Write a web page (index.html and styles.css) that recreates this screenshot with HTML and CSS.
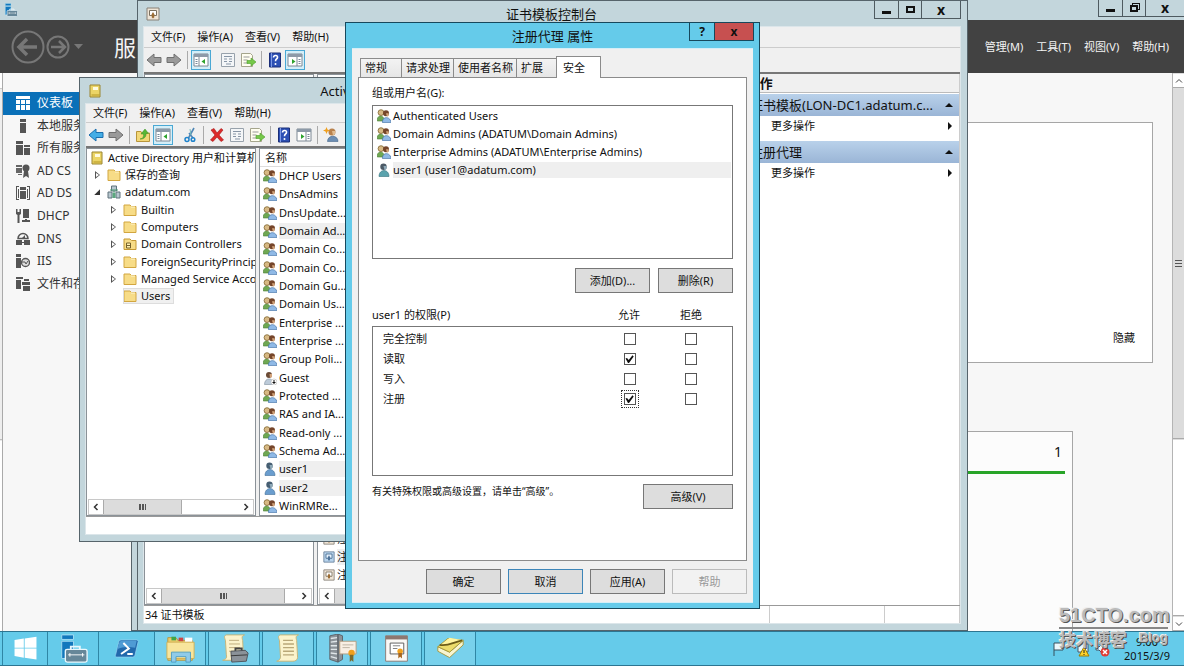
FILE: index.html
```html
<!DOCTYPE html>
<html lang="zh-CN">
<head>
<meta charset="utf-8">
<title>注册代理 属性</title>
<link rel="stylesheet" href="styles.css">
</head>
<body>
<svg class="sprite" aria-hidden="true">
  <symbol id="back" viewBox="0 0 16 16"><path d="M1 8l7-6v3.500h7v5H8V14z" fill="#45aee6" stroke="#1b6fae"/></symbol>
  <symbol id="back-off" viewBox="0 0 16 16"><path d="M1 8l7-6v3.500h7v5H8V14z" fill="#9a9a9a" stroke="#707070"/></symbol>
  <symbol id="fwd-off" viewBox="0 0 16 16"><path d="M15 8L8 2v3.500H1v5h7V14z" fill="#9a9a9a" stroke="#707070"/></symbol>
  <symbol id="pane" viewBox="0 0 16 16"><path d="M1 2h14v12H1z" fill="#fff" stroke="#7c8894"/><path d="M1 2h14v3H1z" fill="#8d9aa8"/><path d="M6 5v9" stroke="#7c8894"/><path d="M2.500 7.500h2M2.500 9.500h2M2.500 11.500h2" stroke="#789"/><path d="M12 7v5L8.500 9.500z" fill="#2da32d"/></symbol>
  <symbol id="pane2" viewBox="0 0 16 16"><path d="M1 2h14v12H1z" fill="#fff" stroke="#7c8894"/><path d="M1 2h14v3H1z" fill="#8d9aa8"/><path d="M10 5v9" stroke="#7c8894"/><path d="M11.500 7.500h2M11.500 9.500h2M11.500 11.500h2" stroke="#789"/><path d="M5 7v5l3.500-2.500z" fill="#2da32d"/></symbol>
  <symbol id="props" viewBox="0 0 16 16"><path d="M1.500 1.500h13v13h-13z" fill="#f4f6f8" stroke="#98a2ac"/><path d="M4 4.500h8M4 7h3M9 7h3M4 9.500h3M9 9.500h3M6 12h5" stroke="#8795a6"/></symbol>
  <symbol id="export" viewBox="0 0 16 16"><path d="M1.500 1.500h9l2 2v11h-11z" fill="#fffef0" stroke="#a5a58c"/><path d="M3.500 5h6M3.500 8h4M3.500 11h4" stroke="#999"/><path d="M7 8.500h4V6l5 4-5 4v-2.500H7z" fill="#76c84a" stroke="#4a9e27" stroke-width=".6"/></symbol>
  <symbol id="help" viewBox="0 0 16 16"><path d="M2.500 1h11v14h-11z" fill="#2d50b4" stroke="#1b2e78"/><path d="M4.500 1v14" stroke="#7f9be6"/><path d="M6.500 5.500c.2-3 4.500-2.500 4 0-.3 1.500-2 1.600-2 3.700" fill="none" stroke="#fff" stroke-width="1.600"/><circle cx="8.500" cy="12" r="1" fill="#fff"/></symbol>
  <symbol id="up" viewBox="0 0 16 16"><path d="M1.500 4.500H6l1 1.500h7.500v8.500h-13z" fill="#f3d878" stroke="#b8953a"/><path d="M5 12c3 0 4-3 3.500-5H6l4-5 3.500 4.500H11c.5 3-2 6-6 5.500z" fill="#57b737" stroke="#388f20" stroke-width=".5"/></symbol>
  <symbol id="cut" viewBox="0 0 16 16"><path d="M12 1L6.500 11M7 6l4 5" stroke="#5087b6" stroke-width="1.600"/><path d="M8 2l1 6" stroke="#7bb"/><circle cx="5" cy="12.500" r="2" fill="none" stroke="#1f83cb" stroke-width="1.500"/><circle cx="11" cy="12.500" r="1.800" fill="none" stroke="#1f83cb" stroke-width="1.500"/></symbol>
  <symbol id="del" viewBox="0 0 16 16"><path d="M2 3l3-1.500L8 6l4-4.500L14 3l-4 5 4.500 5-2.500 1.500L8 10l-4 4.500L1.500 13 6 8z" fill="#dd2b2b" stroke="#a31414" stroke-width=".6"/></symbol>
  <symbol id="newuser" viewBox="0 0 16 16"><circle cx="9" cy="5" r="3.500" fill="#b8814c"/><path d="M9 4h3v3l-2 1.500z" fill="#e0bb90"/><path d="M4.500 14.500c0-7 10.500-7 10.500 0z" fill="#6b8db3" stroke="#44668c" stroke-width=".6"/><path d="M3.500 0l1 2.500 2.500 1-2.500 1-1 2.500-1-2.500L0 3.500l2.500-1z" fill="#f0a020"/></symbol>
  <symbol id="book" viewBox="0 0 14 14"><path d="M2 1h10v12H2z" fill="#ecd566" stroke="#9a8530"/><path d="M3.500 11h8" stroke="#b39622"/><path d="M5 3h5v3H5z" fill="#fffbe0"/></symbol>
  <symbol id="cert" viewBox="0 0 14 14"><path d="M1 1h12v12H1z" fill="#efe5d7" stroke="#888076"/><path d="M3.500 3.500h7v5h-7z" fill="#fff" stroke="#7b7060"/><path d="M7 5l1.500 2.500L8 11.500l-1-1-1 1-.5-4z" fill="#9c6c34"/></symbol>
  <symbol id="certb" viewBox="0 0 14 14"><path d="M1 1h12v12H1z" fill="#b7d3ec" stroke="#667f99"/><path d="M3.500 3.500h7v5h-7z" fill="#e8f4ff" stroke="#456b90"/><path d="M7 5l1.500 2.500L8 11.500l-1-1-1 1-.5-4z" fill="#4d7299"/></symbol>
  <symbol id="folder" viewBox="0 0 14 14"><path d="M1 2h6l1.500 1.500H13v9H1z" fill="#f7dc87" stroke="#d2a640"/><path d="M8 4h4" stroke="#fff6cf"/></symbol>
  <symbol id="folder-dc" viewBox="0 0 14 14"><path d="M1 2h6l1.500 1.500H13v9H1z" fill="#f7dc87" stroke="#c49833"/><path d="M3.500 6h4v5h-4z" fill="#fff0b0" stroke="#75612a"/><path d="M4 8.500h3" stroke="#75612a"/></symbol>
  <symbol id="domain" viewBox="0 0 14 14"><path d="M4.500 1h5v5h-5zM1 7h4v6H1zM9 7h4v6H9z" fill="#b7c7cf" stroke="#60737d"/><path d="M3 5h8M7 6v6" stroke="#4b9b73"/><path d="M5.500 8h3v5h-3z" fill="#5ba77f"/></symbol>
  <symbol id="group" viewBox="0 0 14 14"><path d="M.3 12C-.5 5.500 7 5 7.500 12z" fill="#6fa852" stroke="#4b7d35" stroke-width=".6"/><circle cx="4" cy="3.600" r="2.900" fill="#d7b984" stroke="#80652f" stroke-width=".8"/><circle cx="9" cy="4.200" r="3" fill="#75452a"/><path d="M9 4.200h2.700v2.500L10 7.800z" fill="#d2a47b"/><path d="M5.500 13.600C4.800 7 13.800 7 13.900 13.600z" fill="#8fb9e6" stroke="#4472a8" stroke-width=".7"/></symbol>
  <symbol id="user" viewBox="0 0 14 14"><circle cx="6.500" cy="3.800" r="3.200" fill="#465e72"/><path d="M6.500 3h3v3l-2 1z" fill="#8ea9b8"/><path d="M2 13.500C2 5.500 12 5.500 12 13.500z" fill="#6a9dce" stroke="#426e98" stroke-width=".6"/></symbol>
  <symbol id="user-teal" viewBox="0 0 14 14"><circle cx="6.500" cy="3.800" r="3.200" fill="#4c5a66"/><path d="M6.500 3h3v3l-2 1z" fill="#8ea9b8"/><path d="M2 13.500C2 5.500 12 5.500 12 13.500z" fill="#5aa3ad" stroke="#35727c" stroke-width=".6"/></symbol>
  <symbol id="guest" viewBox="0 0 14 14"><circle cx="6" cy="4" r="3" fill="#6b4b36"/><path d="M6.500 3H9v3L7 7z" fill="#d4a47c"/><path d="M1.500 13.500c0-7.500 9-7.500 9 0z" fill="#bdcbd9" stroke="#7d8e9e" stroke-width=".6"/><circle cx="11" cy="11" r="3" fill="#fff" stroke="#aaa" stroke-width=".5"/><path d="M10.500 9h1v2H13l-2 2-2-2h1.500z" fill="#111"/></symbol>
  <symbol id="dash" viewBox="0 0 14 14"><path d="M0 0h14v3H0zM0 4h4v4H0zM5 4h4v4H5zM10 4h4v4h-4zM0 9h4v5H0zM5 9h4v5H5zM10 9h4v5h-4z" fill="#fff"/></symbol>
  <symbol id="srv" viewBox="0 0 14 14"><path d="M4 0h6v3H4zM4 4h6v10H4z" fill="#555"/></symbol>
  <symbol id="srvs" viewBox="0 0 14 14"><path d="M0 0h7v3H0zM0 4h7v10H0zM8 4h6v2H8zM8 7h6v7H8z" fill="#555"/></symbol>
  <symbol id="adcs" viewBox="0 0 14 14"><path d="M0 1h6v2H0zM0 4h6v5H0zM2 10h4v1H2z" fill="#666"/><circle cx="10" cy="4" r="3.500" fill="#555"/><path d="M8 7l-1 7 3-2 3 2-1-7z" fill="#555"/></symbol>
  <symbol id="adds" viewBox="0 0 14 14"><path d="M0 0h3v1H1v12h2v1H0zM14 0h-3v1h2v12h-2v1h3zM4 1h6v3H4zM4 5h6v8H4zM2 3h1v9H2zM11 3h1v9h-1z" fill="#555"/></symbol>
  <symbol id="dhcp" viewBox="0 0 14 14"><path d="M0 0h1.500v3h2V0H5v5L3.500 6v8h-2V6L0 5zM7 0h6v9H7zM6 11h3v-1h2v1h3v2H6z" fill="#555"/></symbol>
  <symbol id="dns" viewBox="0 0 14 14"><path d="M2 6.500a5 5 0 0 1 10 0z" fill="none" stroke="#555" stroke-width="1.500"/><path d="M6 6l3-3v3zM0 8h6v5H0zM8 8h6v5H8zM6 10h2v1H6z" fill="#555"/></symbol>
  <symbol id="iis" viewBox="0 0 14 14"><path d="M0 0h5v3H0zM0 4h5v10H0z" fill="#555"/><circle cx="9.500" cy="8.500" r="4" fill="#ddd" stroke="#555" stroke-width="1.300"/><path d="M6 8h3l1 2 2-3" stroke="#555" fill="none"/></symbol>
  <symbol id="files" viewBox="0 0 14 14"><path d="M0 0h7v2H0zM0 3h5v9H0zM8 2h5v2H8zM6 5h8v3H6zM7 9h7v5H7z" fill="#555"/></symbol>
  <symbol id="srvmgr" viewBox="0 0 32 32"><path d="M3 1h13v5H3zM3 8h13v19H3z" fill="#1278bd" stroke="#a9def3"/><path d="M13 17v-3h10v3" fill="none" stroke="#e9f7fc" stroke-width="2"/><rect x="7" y="17" width="24" height="14" rx="2" fill="#668799" stroke="#e9f7fc" stroke-width="1.500"/><path d="M10 23h18M12 21v4M26 21v4" stroke="#fff"/></symbol>
</svg>

<main class="desktop">
  <section class="server" aria-label="服务器管理器">
    <div class="server-title">
      <svg class="i14"><use href="#srvmgr"/></svg>
      <div class="controls"><button aria-label="最小化"><i class="min"></i></button><button aria-label="还原"><i class="max rest"></i></button><button class="wide" aria-label="关闭">x</button></div>
    </div>
    <header class="server-head">
      <svg class="nav" viewBox="0 0 76 36"><g fill="none" stroke="#777" stroke-width="2"><circle cx="17" cy="18" r="15.500"/><circle cx="47" cy="18" r="10.500"/></g><path d="M26 18H9M16 10l-8 8 8 8" fill="none" stroke="#777" stroke-width="3.500"/><path d="M40 18h13M48 12l6 6-6 6" fill="none" stroke="#777" stroke-width="2.500"/><path d="M63 15h9l-4.500 5z" fill="#777"/></svg>
      <h1>服务器管理器</h1>
      <nav><a href="#">管理(M)</a><a href="#">工具(T)</a><a href="#">视图(V)</a><a href="#">帮助(H)</a></nav>
    </header>
    <div class="server-body">
      <div class="edge"></div>
      <nav class="side">
        <a class="on" href="#"><svg class="i14"><use href="#dash"/></svg>仪表板</a>
        <a href="#"><svg class="i14"><use href="#srv"/></svg>本地服务器</a>
        <a href="#"><svg class="i14"><use href="#srvs"/></svg>所有服务器</a>
        <a href="#"><svg class="i14"><use href="#adcs"/></svg>AD CS</a>
        <a href="#"><svg class="i14"><use href="#adds"/></svg>AD DS</a>
        <a href="#"><svg class="i14"><use href="#dhcp"/></svg>DHCP</a>
        <a href="#"><svg class="i14"><use href="#dns"/></svg>DNS</a>
        <a href="#"><svg class="i14"><use href="#iis"/></svg>IIS</a>
        <a href="#"><svg class="i14"><use href="#files"/></svg>文件和存储服务</a>
      </nav>
      <div class="dash">
        <div class="welcome"><a href="#">隐藏</a></div>
        <div class="role"><strong>1</strong></div>
      </div>
      <div class="vscroll"><span><svg viewBox="0 0 8 8"><path d="M1 5.500l3-3 3 3"/></svg></span><span class="vthumb"><i></i></span><span class="vtrack"></span><span><svg viewBox="0 0 8 8"><path d="M1 2.500l3 3 3-3"/></svg></span></div>
    </div>
  </section>

  <div class="win behind"></div>

  <section class="win certwin" aria-label="证书模板控制台">
    <div class="title"><svg class="i14"><use href="#cert"/></svg><h2>证书模板控制台</h2>
      <div class="controls"><button aria-label="最小化"><i class="min"></i></button><button aria-label="最大化"><i class="max"></i></button><button class="wide" aria-label="关闭">x</button></div>
    </div>
    <div class="client">
      <div class="menu"><button>文件(F)</button><button>操作(A)</button><button>查看(V)</button><button>帮助(H)</button></div>
      <div class="tools">
        <svg><use href="#back-off"/></svg><svg><use href="#fwd-off"/></svg><hr><svg class="framed"><use href="#pane"/></svg><span></span><svg><use href="#props"/></svg><svg><use href="#export"/></svg><hr><svg><use href="#help"/></svg><svg class="framed"><use href="#pane2"/></svg>
      </div>
      <div class="panes">
        <div class="pane left"><div class="hscroll"><svg viewBox="0 0 8 8"><path d="M5.500 1l-3 3 3 3"/></svg><span class="thumb long"><i></i></span><span class="track"></span><svg viewBox="0 0 8 8"><path d="M2.500 1l3 3-3 3"/></svg></div></div>
        <div class="pane mid">
          <ul class="certs"><li><svg class="i12"><use href="#cert"/></svg><span>注册</span></li><li class="sel"><svg class="i12"><use href="#certb"/></svg><span>注册代理</span></li><li><svg class="i12"><use href="#cert"/></svg><span>注册代理(计算机)</span></li></ul>
          <div class="hscroll"><svg viewBox="0 0 8 8"><path d="M5.500 1l-3 3 3 3"/></svg><span class="thumb full"><i></i></span><svg viewBox="0 0 8 8"><path d="M2.500 1l3 3-3 3"/></svg></div>
        </div>
        <aside class="actions">
          <h3>操作</h3>
          <div class="act-head"><span>证书模板(LON-DC1.adatum.c...</span><i class="tri-up"></i></div>
          <button class="act"><span>更多操作</span><i class="tri-right"></i></button>
          <div class="act-head"><span>注册代理</span><i class="tri-up"></i></div>
          <button class="act"><span>更多操作</span><i class="tri-right"></i></button>
        </aside>
      </div>
      <div class="status"><span class="grow">34 证书模板</span><span class="cell1"></span><span class="cell2"></span></div>
    </div>
  </section>

  <section class="win adwin" aria-label="Active Directory 用户和计算机">
    <div class="title"><svg class="i14"><use href="#book"/></svg><h2>Active Directory 用户和计算机</h2></div>
    <div class="client">
      <div class="menu"><button>文件(F)</button><button>操作(A)</button><button>查看(V)</button><button>帮助(H)</button></div>
      <div class="tools">
        <svg><use href="#back"/></svg><svg><use href="#fwd-off"/></svg><hr><svg><use href="#up"/></svg><svg class="framed"><use href="#pane"/></svg><span></span><svg><use href="#cut"/></svg><hr><svg><use href="#del"/></svg><svg><use href="#props"/></svg><svg><use href="#export"/></svg><hr><svg><use href="#help"/></svg><svg><use href="#pane2"/></svg><hr><svg><use href="#newuser"/></svg>
      </div>
      <div class="panes">
        <div class="pane left">
          <ul class="tree">
            <li><svg class="i14"><use href="#book"/></svg>Active Directory 用户和计算机</li>
            <li class="l1"><i class="closed"></i><svg class="i14"><use href="#folder"/></svg>保存的查询</li>
            <li class="l1"><i class="open"></i><svg class="i14"><use href="#domain"/></svg>adatum.com</li>
            <li class="l2"><i class="closed"></i><svg class="i14"><use href="#folder"/></svg>Builtin</li>
            <li class="l2"><i class="closed"></i><svg class="i14"><use href="#folder"/></svg>Computers</li>
            <li class="l2"><i class="closed"></i><svg class="i14"><use href="#folder-dc"/></svg>Domain Controllers</li>
            <li class="l2"><i class="closed"></i><svg class="i14"><use href="#folder"/></svg>ForeignSecurityPrincipals</li>
            <li class="l2"><i class="closed"></i><svg class="i14"><use href="#folder"/></svg>Managed Service Accounts</li>
            <li class="l2"><i></i><span class="picked"><svg class="i14"><use href="#folder"/></svg>Users</span></li>
          </ul>
          <div class="hscroll"><svg viewBox="0 0 8 8"><path d="M5.500 1l-3 3 3 3"/></svg><span class="thumb"><i></i></span><span class="track"></span><svg viewBox="0 0 8 8"><path d="M2.500 1l3 3-3 3"/></svg></div>
        </div>
        <div class="pane mid">
          <div class="col">名称</div>
          <ul class="objects">
            <li><svg class="i14"><use href="#group"/></svg><span>DHCP Users</span></li>
            <li><svg class="i14"><use href="#group"/></svg><span>DnsAdmins</span></li>
            <li><svg class="i14"><use href="#group"/></svg><span>DnsUpdate...</span></li>
            <li class="sel"><svg class="i14"><use href="#group"/></svg><span>Domain Ad...</span></li>
            <li><svg class="i14"><use href="#group"/></svg><span>Domain Co...</span></li>
            <li><svg class="i14"><use href="#group"/></svg><span>Domain Co...</span></li>
            <li><svg class="i14"><use href="#group"/></svg><span>Domain Gu...</span></li>
            <li><svg class="i14"><use href="#group"/></svg><span>Domain Us...</span></li>
            <li><svg class="i14"><use href="#group"/></svg><span>Enterprise ...</span></li>
            <li><svg class="i14"><use href="#group"/></svg><span>Enterprise ...</span></li>
            <li><svg class="i14"><use href="#group"/></svg><span>Group Poli...</span></li>
            <li><svg class="i14"><use href="#guest"/></svg><span>Guest</span></li>
            <li><svg class="i14"><use href="#group"/></svg><span>Protected ...</span></li>
            <li><svg class="i14"><use href="#group"/></svg><span>RAS and IA...</span></li>
            <li><svg class="i14"><use href="#group"/></svg><span>Read-only ...</span></li>
            <li><svg class="i14"><use href="#group"/></svg><span>Schema Ad...</span></li>
            <li class="sel"><svg class="i14"><use href="#user"/></svg><span>user1</span></li>
            <li class="sel"><svg class="i14"><use href="#user"/></svg><span>user2</span></li>
            <li><svg class="i14"><use href="#group"/></svg><span>WinRMRe...</span></li>
          </ul>
        </div>
      </div>
      <div class="status"></div>
    </div>
  </section>

  <section class="dialog" role="dialog" aria-label="注册代理 属性">
    <div class="dlg-title"><h2>注册代理 属性</h2><div class="dlg-controls"><button aria-label="帮助">?</button><button class="close" aria-label="关闭">x</button></div></div>
    <div class="dlg-client">
      <div class="tabs" role="tablist"><button role="tab">常规</button><button role="tab">请求处理</button><button role="tab">使用者名称</button><button role="tab">扩展</button><button role="tab" class="active" aria-selected="true">安全</button></div>
      <div class="page">
        <div class="lbl">组或用户名(G):</div>
        <ul class="box names">
          <li><svg class="i14"><use href="#group"/></svg><span>Authenticated Users</span></li>
          <li><svg class="i14"><use href="#group"/></svg><span>Domain Admins (ADATUM\Domain Admins)</span></li>
          <li><svg class="i14"><use href="#group"/></svg><span>Enterprise Admins (ADATUM\Enterprise Admins)</span></li>
          <li class="sel"><svg class="i14"><use href="#user-teal"/></svg><span>user1 (user1@adatum.com)</span></li>
        </ul>
        <div class="row end"><button class="btn">添加(D)...</button><button class="btn">删除(R)</button></div>
        <div class="perm-head"><span>user1 的权限(P)</span><span class="c">允许</span><span class="c">拒绝</span></div>
        <div class="box perms">
          <table>
            <tr><th scope="row">完全控制</th><td><input type="checkbox" aria-label="完全控制 允许"></td><td><input type="checkbox" aria-label="完全控制 拒绝"></td></tr>
            <tr><th scope="row">读取</th><td><input type="checkbox" checked aria-label="读取 允许"></td><td><input type="checkbox" aria-label="读取 拒绝"></td></tr>
            <tr><th scope="row">写入</th><td><input type="checkbox" aria-label="写入 允许"></td><td><input type="checkbox" aria-label="写入 拒绝"></td></tr>
            <tr><th scope="row">注册</th><td><input type="checkbox" checked class="focus" aria-label="注册 允许"></td><td><input type="checkbox" aria-label="注册 拒绝"></td></tr>
          </table>
        </div>
        <div class="row advanced"><span>有关特殊权限或高级设置，请单击“高级”。</span><button class="btn big">高级(V)</button></div>
      </div>
      <div class="row end footer"><button class="btn">确定</button><button class="btn default">取消</button><button class="btn">应用(A)</button><button class="btn" disabled>帮助</button></div>
    </div>
  </section>
</main>

<footer class="taskbar">
  <button class="start" aria-label="开始"><svg viewBox="0 0 32 32"><path d="M3 6l11-2v11H3zM15 4l14-2v13H15zM3 16h11v11L3 25zM15 16h14v13l-14-2z" fill="#fff"/></svg></button>
  <button class="pin" aria-label="服务器管理器"><svg><use href="#srvmgr"/></svg></button>
  <button class="flat" aria-label="PowerShell"><svg viewBox="0 0 32 32"><path d="M9 5h20a2 2 0 0 1 2 2l-4 17a3 3 0 0 1-3 3H4a2 2 0 0 1-2-3L6 8a3 3 0 0 1 3-3z" fill="#2269ac" stroke="#8fd0ef"/><path d="M9 6h20l-2 9C18 13 10 14 4 17l3-9z" fill="#4f9bd4"/><path d="M12 9l7 7-10 7M17 23h7" fill="none" stroke="#fff" stroke-width="2.500"/></svg></button>
  <button class="run" aria-label="文件资源管理器"><svg viewBox="0 0 32 32"><path d="M2 4h9l2 3h16v22H2z" fill="#eacb6b" stroke="#b9963c"/><path d="M6 3h5v4H6z" fill="#3da64a"/><path d="M14 4h5v4h-5z" fill="#c44"/><path d="M21 4h8v5h-8z" fill="#fff"/><path d="M1 9h30v18H1z" fill="#f8e59c" stroke="#cfae52"/><path d="M6 31V20h21v11h-5v-6H11v6z" fill="#8fcbe9" stroke="#4b9cc4"/></svg></button>
  <button class="run" aria-label="管理工具"><svg viewBox="0 0 32 32"><path d="M7 1h20c-3 1-3 3-2 6l1 19c0 3-3 3-4 3H3c3-1 5-2 4-6L6 7C5 4 4 2 7 1z" fill="#fbf3cc" stroke="#c7b272"/><path d="M10 7h11M10 11h12M10 15h12M10 19h8" stroke="#b9a878"/><path d="M17 19v-3h7v3" fill="none" stroke="#444" stroke-width="2"/><path d="M12 19l16-1 3 3-2 9-16 1z" fill="#8b9299" stroke="#4b5056"/><path d="M12 24l18-1" stroke="#333"/></svg></button>
  <button class="run" aria-label="脚本"><svg viewBox="0 0 32 32"><path d="M7 1h20c-3 1-3 3-2 6l1 19c0 3-3 4-5 4H3c3-1 5-3 4-7L6 7C5 4 4 2 7 1z" fill="#fbf3cc" stroke="#c7b272"/><path d="M10 7h11M10 11h12M10 15h12M10 19h12M10 23h12" stroke="#b9a878" stroke-width="1.500"/></svg></button>
  <button class="run" aria-label="证书颁发机构"><svg viewBox="0 0 32 32"><path d="M2 2l9-2v31l-9-3zM11 0l5 2v26l-5 3z" fill="#8b9298" stroke="#596067"/><path d="M3 5l7-1M3 9l7-1M3 13h7M3 17h7M3 21l7 1M3 25l7 2" stroke="#e0e6e9" stroke-width="1.500"/><path d="M13 8h18v14H13z" fill="#f8efe4" stroke="#b49a7c"/><path d="M16 12h12M16 15h8" stroke="#b9b0a0"/><circle cx="26" cy="21" r="3.500" fill="#f0a01c"/><path d="M24 23h4v8l-2-2-2 2z" fill="#7b6a2b"/></svg></button>
  <button class="run" aria-label="证书模板控制台"><svg viewBox="0 0 32 32"><path d="M4 2h24v28H4z" fill="#faf8f5" stroke="#8a7770"/><path d="M4 2h24v4H4z" fill="#8d7770"/><path d="M9 10h15v12H9z" fill="#fff" stroke="#555"/><path d="M12 13h8M12 16h5" stroke="#777"/><circle cx="20" cy="19" r="3" fill="#f0a01c"/><path d="M18 21h4v6l-2-2-2 2z" fill="#a8651c"/></svg></button>
  <button class="run" aria-label="AD 用户和计算机"><svg viewBox="0 0 32 32"><path d="M2 14l13 6 15-13v5L15 26 2 19z" fill="#f8f5d0" stroke="#a39538"/><path d="M2 14L13 5l17 2-15 13z" fill="#ecdc6b" stroke="#a39538"/><path d="M5 12c9 2 14-3 25-5L15 4z" fill="#fff5a0"/><path d="M4 12c9 2 15-3 25-5" fill="none" stroke="#6d5d18" stroke-width="2"/></svg></button>
  <div class="tray">
    <svg viewBox="0 0 64 16"><path d="M2 15V2h9v7H2" fill="#eaf8fd" stroke="#39515c"/><path d="M26 3h10v8H26z" fill="#eaf8fd" stroke="#456"/><path d="M32 6l5 9H27z" fill="#ffd32c" stroke="#9b7a00"/><path d="M32 9v3M32 13v1" stroke="#222"/><path d="M44 6h3l4-4v11l-4-4h-3z" fill="#eaf8fd" stroke="#456"/><circle cx="53" cy="11" r="4.500" fill="#df3c35"/><path d="M51 9l4 4M55 9l-4 4" stroke="#fff" stroke-width="1.500"/></svg>
    <time>9:00<br>2015/3/9</time>
  </div>
</footer>
<div class="mark"><b>51CTO.com</b><div><span>技术博客</span><em>Blog</em></div></div>
</body>
</html>
```

FILE: styles.css
```css
* { box-sizing: border-box; }
body {
  margin: 0;
  height: 100vh;
  display: flex;
  flex-direction: column;
  overflow: hidden;
  position: relative;
  font: 11px/16px "Noto Sans", "Noto Sans CJK SC", sans-serif;
  color: #111;
  background: #65cbea;
}
h1, h2, h3, ul { margin: 0; padding: 0; font-weight: 400; list-style: none; }
button { font: inherit; color: inherit; border: 0; background: none; padding: 0; margin: 0; }
a { color: inherit; text-decoration: none; }
svg { flex: none; display: block; }
.sprite { position: absolute; width: 0; height: 0; }
.i14 { width: 14px; height: 14px; }
.i12 { width: 12px; height: 12px; }
.desktop { flex: 1; position: relative; overflow: hidden; min-height: 0; }

/* server manager */
.server { height: 100%; display: flex; flex-direction: column; background: #f7f7f7; }
.server-title { height: 20px; flex: none; background: #c3d6dc; display: flex; padding-left: 4px; align-items: center; justify-content: space-between; }
.controls { display: flex; align-self: flex-start; border: 1px solid #4e5a60; border-top: 0; height: 18px; }
.server-title .controls { height: 17px; border-right: 0; }
.controls button { width: 23px; display: grid; place-items: center; font: bold 14px/14px "Noto Sans", sans-serif; }
.controls button + button { border-left: 1px solid #4e5a60; }
.controls .wide { width: 39px; }
.min { width: 9px; height: 3px; background: #111; margin-top: 5px; }
.max { width: 9px; height: 7px; border: 2px solid #111; }
.rest { width: 8px; box-shadow: 2px -2px 0 -1px #c3d6dc, 2px -2px 0 0 #111; }
.server-head { height: 53px; flex: none; background: #424242; color: #f4f4f4; display: flex; align-items: center; padding: 0 15px 0 11px; }
.nav { width: 76px; height: 36px; }
.server-head h1 { font-size: 22px; line-height: 30px; margin-left: 27px; flex: 1; }
.server-head nav { display: flex; gap: 13px; }
.server-body { flex: 1; display: flex; min-height: 0; }
.edge { width: 3px; background: linear-gradient(#fff 15px, #aaa 15px, #eee 16px, #eee 366px, #aaa 366px, #fff 368px); border-right: 1px solid #aaa; }
.side { width: 160px; height: 222px; padding-top: 19px; display: grid; grid-auto-rows: 1fr; font-size: 12px; line-height: 18px; color: #333; }
.side a { display: flex; align-items: center; gap: 7px; padding-left: 13px; white-space: nowrap; }
.side .on { background: #0a70b8; color: #fff; }
.dash { flex: 1; padding: 49px 19px 0; display: flex; flex-direction: column; gap: 68px; }
.welcome { height: 241px; flex: none; background: #fff; border: 1px solid #a6a6a6; display: flex; justify-content: flex-end; align-items: flex-end; padding: 16px 17px; }
.role { flex: 1; margin-right: 80px; background: #fcfcfc; border: 1px solid #a6a6a6; border-bottom: 0; padding: 10px 7px; }
.role strong { display: block; font-weight: 400; font-size: 14px; line-height: 20px; text-align: right; padding: 0 3px 9px; border-bottom: 3px solid #28a428; }
.vscroll { width: 12px; border-left: 1px solid #b4b4b4; background: #fff; display: flex; flex-direction: column; }
.vscroll span { height: 15px; flex: none; display: grid; place-items: center; border-bottom: 1px solid #aaa; border-top: 1px solid #ddd; }
.vscroll svg { width: 8px; height: 8px; fill: none; stroke: #444; }
.vscroll .vthumb { flex: 352; background: #dcdcdc; }
.vscroll .vtrack { flex: 176; }
.vthumb i { width: 7px; height: 7px; background: repeating-linear-gradient(#555 0 1px, transparent 1px 3px); }

/* console windows */
.win { position: absolute; display: flex; flex-direction: column; background: #c3d6dc; border: 1px solid #56646b; padding: 0 6px 6px 5px; }
.behind { left: 131px; top: 100px; bottom: 0; width: 300px; }
.certwin { left: 137px; top: 0; bottom: 0; width: 831px; }
.adwin { left: 79px; top: 77px; height: 465px; width: 644px; }
.title { height: 25px; flex: none; display: flex; align-items: center; position: relative; padding-left: 3px; }
.certwin .title { padding-right: 18px; }
.title h2, .dlg-title h2 { flex: 1; text-align: center; font-size: 13px; line-height: 20px; }
.certwin .controls { position: absolute; right: 0; top: 0; }
.client { flex: 1; min-height: 0; display: flex; flex-direction: column; background: #f0f0f0; border: 1px solid #dce6ea; }
.menu { height: 20px; flex: none; display: flex; gap: 12px; padding-left: 7px; }
.tools { height: 27px; flex: none; display: flex; align-items: center; border-top: 1px solid #ccc; border-bottom: 2px solid #777; }
.tools svg { width: 20px; height: 20px; padding: 2px; }
.tools .framed { border: 1px solid #4aa8d4; background: #d4eef8; padding: 1px; }
.tools hr { width: 1px; height: 18px; margin: 0 3px; border: 0; background: #aaa; }
.tools span { width: 7px; }
.panes { flex: 1; min-height: 0; display: flex; gap: 3px; }
.pane { background: #fff; border: 1px solid #8b9298; display: flex; flex-direction: column; overflow: hidden; }
.left { width: 170px; flex: none; }
.left .hscroll { margin-top: auto; }
.mid { flex: 1; }
.certwin .mid { justify-content: flex-end; }
.hscroll { display: flex; align-items: center; height: 16px; flex: none; margin: 0 1px; border: 1px solid #c8c8c8; }
.hscroll svg { width: 14px; height: 8px; fill: none; stroke: #333; stroke-width: 1.500; }
.thumb { width: 79px; height: 14px; background: #dcdcdc; border: 1px solid #aaa; border-width: 0 1px; display: grid; place-items: center; }
.thumb i { width: 7px; height: 6px; background: repeating-linear-gradient(90deg, #555 0 2px, transparent 2px 3px); }
.long { width: 124px; }
.full, .track { flex: 1; }
.certs { padding-bottom: 4px; }
.certs li { height: 18px; display: flex; align-items: center; gap: 2px; padding-left: 5px; white-space: nowrap; }
.sel span { background: #efefef; flex: 1; }
.status { height: 18px; flex: none; background: #fff; border-top: 1px solid #999; display: flex; line-height: 18px; }
.status span { border-right: 1px solid #ccc; padding-left: 1px; }
.grow { flex: 1; }
.cell1 { width: 115px; }
.cell2 { width: 75px; }
.adwin .menu { height: 18px; }
.adwin .tools { height: 26px; }
.adwin .status { height: 18px; }
.tree { height: 156px; display: grid; grid-auto-rows: 1fr; padding-left: 3px; }
.tree li { display: flex; align-items: center; gap: 4px; white-space: nowrap; overflow: hidden; line-height: 16px; }
.tree i { width: 12px; height: 10px; }
.l1 { padding-left: 1px; }
.l2 { padding-left: 17px; }
.tree i.closed::before { content: ""; display: block; width: 5px; height: 8px; margin: 1px 4px; background: #555; clip-path: polygon(0 0, 100% 50%, 0 100%, 0 0, 1px 2px, 1px 6px, 4px 50%, 1px 2px); }
.tree i.open::before { content: ""; display: block; width: 6px; height: 6px; margin: 2px 3px; background: #333; clip-path: polygon(100% 0, 100% 100%, 0 100%); }
.picked { display: flex; align-items: center; gap: 4px; background: #f0f0f0; outline: 1px solid #ddd; outline-offset: -1px; padding-right: 4px; }
.col { height: 18px; flex: none; border-bottom: 1px solid #ddd; padding-left: 5px; line-height: 18px; }
.objects { flex: 1; display: grid; grid-auto-rows: 1fr; }
.objects li, .names li { display: flex; align-items: center; gap: 2px; padding-left: 3px; white-space: nowrap; }
.actions { width: 216px; flex: none; background: #fff; border-right: 1px solid #ccc; }
.actions h3 { height: 19px; background: #f0f0f0; border-bottom: 1px solid #bbb; font-weight: 700; line-height: 18px; padding-left: 3px; margin-bottom: 1px; }
.act-head { height: 22px; display: flex; align-items: center; justify-content: space-between; background: linear-gradient(#b9d1ea, #9ab5d6); padding: 0 6px; font-size: 13px; line-height: 20px; }
.act { width: 100%; height: 20px; display: flex; align-items: center; justify-content: space-between; padding: 0 7px 0 27px; margin-bottom: 5px; }
.tri-up { border: 4px solid transparent; border-bottom-color: #111; border-top: 0; }
.tri-right { border: 4px solid transparent; border-left-color: #111; border-right: 0; }

/* property dialog */
.dialog { position: absolute; left: 345px; top: 22px; width: 415px; display: flex; flex-direction: column; background: #65cbea; border: 1px solid #17485c; padding: 0 6px 5px; }
.dlg-title { height: 25px; display: flex; align-items: center; position: relative; }
.dlg-controls { position: absolute; right: -1px; top: 0; display: flex; height: 18px; border: 1px solid #17485c; border-top: 0; font: bold 12px/16px "Noto Sans", sans-serif; }
.dlg-controls button { width: 24px; }
.dlg-controls .close { width: 39px; background: #c75050; border-left: 1px solid #17485c; }
.dlg-client { background: #f0f0f0; padding: 7px 6px 8px; border: 1px solid #d5eef7; border-width: 1px 0; }
.tabs { display: flex; align-items: flex-end; padding-left: 2px; height: 21px; }
.tabs button { height: 19px; border: 1px solid #8b8b8b; border-bottom: 0; border-right: 0; padding: 0 4px; text-align: left; white-space: nowrap; background: linear-gradient(#f3f3f3, #e6e6e6); width: 41px; }
.tabs button:nth-child(2) { width: 52px; }
.tabs button:nth-child(3) { width: 63px; }
.tabs button:nth-child(4) { width: 40px; }
.tabs .active { height: 22px; width: 45px; margin-bottom: -1px; padding: 0 6px; background: #fff; border-right: 1px solid #8b8b8b; position: relative; }
.page { background: #fff; border: 1px solid #8b8b8b; padding: 7px 13px 51px; }
.lbl { line-height: 16px; margin-bottom: 4px; }
.box { border: 1px solid #777; background: #fff; }
.names { height: 154px; padding: 1px; }
.row { display: flex; gap: 8px; }
.names li { height: 18px; }
.end { justify-content: flex-end; }
.names + .row { margin: 9px 0 14px; }
.btn { width: 75px; height: 25px; border: 1px solid #777; background: #ddd; }
.btn.default { border-color: #3c85b8; }
.btn:disabled { background: #f2f2f2; border-color: #bbb; color: #999; }
.big { width: 90px; }
.perm-head { display: flex; padding-right: 11px; margin-bottom: 3px; line-height: 16px; }
.perm-head span:first-child { flex: 1; }
.c { width: 62px; text-align: center; }
.perms { height: 150px; padding: 2px 11px 0 10px; }
table { width: 100%; border-collapse: collapse; table-layout: fixed; }
tr { height: 20px; }
th { font-weight: 400; text-align: left; padding: 0; }
td { width: 61px; padding: 0; text-align: center; line-height: 0; }
input { appearance: none; width: 12px; height: 12px; margin: 0; border: 1px solid #555; background: #fff; vertical-align: middle; }
input:checked::before { content: ""; display: block; width: 10px; height: 10px; background: #111; clip-path: polygon(10% 45%, 25% 40%, 42% 60%, 80% 12%, 92% 25%, 45% 90%, 35% 90%); }
.focus { outline: 1px dotted #333; outline-offset: 2px; }
.advanced { margin-top: 8px; justify-content: space-between; font-size: 10px; line-height: 14px; }
.advanced .btn { font-size: 11px; }
.footer { margin-top: 8px; gap: 7px; }

/* taskbar */
.taskbar { height: 35px; flex: none; display: flex; background: #65cbea; border: 1px solid #2d7591; border-width: 1px 0; padding-left: 2px; }
.taskbar button { width: 52px; margin-right: 2px; display: grid; place-items: center; border: 1px solid #2f86a5; border-width: 0 1px; background: #78d1ec; }
.taskbar button svg { width: 29px; height: 29px; }
.taskbar .start { width: 45px; margin: 0; background: none; border-right: 0; }
.taskbar .start svg { width: 27px; height: 27px; }
.taskbar .pin { margin: 0; background: none; }
.taskbar .flat { width: 55px; margin: 0; background: none; border: 0; }
.taskbar .flat svg { width: 25px; height: 27px; }
.tray { margin-left: auto; display: flex; align-items: center; gap: 8px; padding-right: 14px; }
.tray svg { width: 64px; height: 16px; }
time { font-size: 11px; line-height: 14px; text-align: center; }

/* watermark */
.mark { position: absolute; right: 16px; bottom: 15px; width: 109px; color: #bbb; text-shadow: 1px 1px 0 #555, -1px -1px 0 #eee; }
.mark b { display: block; font: bold 20px/24px "Liberation Sans", sans-serif; border-bottom: 2px solid #888; white-space: nowrap; }
.mark div { display: flex; justify-content: space-between; font-size: 17px; line-height: 22px; font-weight: 700; }
.mark em { font: bold 13px/18px "Liberation Sans", sans-serif; }
```
